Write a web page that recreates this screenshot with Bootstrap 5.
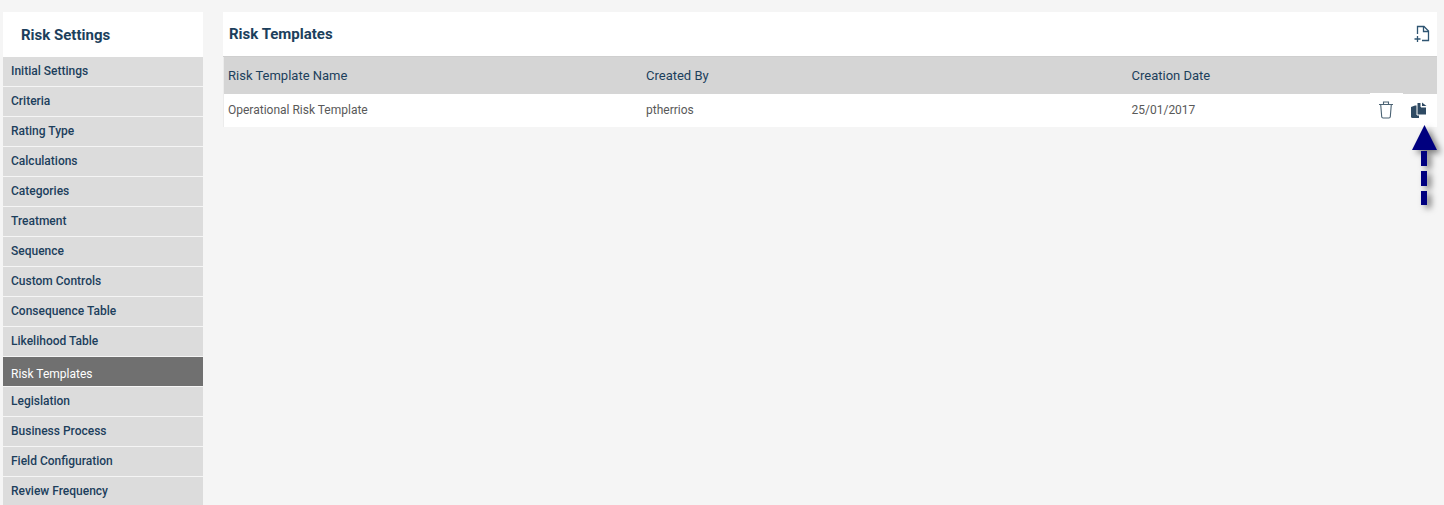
<!DOCTYPE html>
<html lang="en">
<head>
  <meta charset="UTF-8" />
  <meta name="viewport" content="width=device-width, initial-scale=1.0" />
  <title>Risk Templates</title>
  <link href="https://cdn.jsdelivr.net/npm/bootstrap@5.3.0/dist/css/bootstrap.min.css" rel="stylesheet">
  <style>
    html, body { height: 505px; overflow: hidden; }
    body {
      background: #f5f5f5;
      font-family: Roboto, "Liberation Sans", sans-serif;
      color: #1c3f5c;
    }
    .page-wrap { padding: 12px 7px 0 3px; gap: 20px; position: relative; }
    .side-panel { width: 200px; flex: none; }
    .side-title {
      height: 45px;
      padding: 14px 18px 0;
      font-size: 15px;
      font-weight: 700;
      line-height: 19px;
      background: #fff;
    }
    .side-link {
      display: block;
      height: 29px;
      margin-bottom: 1px;
      padding: 0 8px;
      font-size: 12px;
      font-weight: 500;
      line-height: 28px;
      color: #1c3f5c;
      background: #dcdcdc;
      text-decoration: none;
    }
    .side-link.current { background: #707070; color: #fff; line-height: 34px; font-weight: 400; }
    .main-panel { flex: 1; min-width: 0; }
    .main-head {
      height: 45px;
      padding: 0 7px 0 6px;
      background: #fff;
      border-bottom: 1px solid #cfcfcf;
    }
    .main-head h1 { font-size: 15px; font-weight: 700; margin: 0; line-height: 19px; }
    .tpl-table { table-layout: fixed; margin: 0; border-left: 1px solid #ececec; }
    .tpl-table th, .tpl-table td { padding: 0 0 0 4px; border: 0; vertical-align: middle; font-size: 12px; }
    .tpl-table th {
      height: 37px;
      background: #d5d5d5;
      color: #1c3f5c;
      font-size: 13px;
      font-weight: 400;
    }
    .tpl-table td { height: 33px; padding-bottom: 1px; background: #fff; color: #595959; }
    .tool-cell { position: relative; }
    .tool-cell::before {
      content: "";
      position: absolute;
      top: -1px;
      right: 34px;
      width: 33px;
      height: 1px;
      background: #fff;
    }
    .row-tools { gap: 17px; padding-right: 10px; }
    .up-arrow {
      position: absolute;
      left: 1406px;
      top: 123px;
      filter: drop-shadow(4px 3px 3px rgba(0,0,0,.5));
    }
  </style>
</head>
<body>
<div class="page-wrap d-flex">
  <div class="side-panel">
    <div class="side-title">Risk Settings</div>
    <a class="side-link" href="#">Initial Settings</a>
    <a class="side-link" href="#">Criteria</a>
    <a class="side-link" href="#">Rating Type</a>
    <a class="side-link" href="#">Calculations</a>
    <a class="side-link" href="#">Categories</a>
    <a class="side-link" href="#">Treatment</a>
    <a class="side-link" href="#">Sequence</a>
    <a class="side-link" href="#">Custom Controls</a>
    <a class="side-link" href="#">Consequence Table</a>
    <a class="side-link" href="#">Likelihood Table</a>
    <a class="side-link current" href="#">Risk Templates</a>
    <a class="side-link" href="#">Legislation</a>
    <a class="side-link" href="#">Business Process</a>
    <a class="side-link" href="#">Field Configuration</a>
    <a class="side-link" href="#">Review Frequency</a>
  </div>
  <div class="main-panel">
    <div class="main-head d-flex align-items-center justify-content-between">
      <h1>Risk Templates</h1>
      <svg width="16" height="18" viewBox="0 0 16 18" fill="none" stroke="#2f5572" stroke-width="1.3">
        <path d="M3.500 9V1.500h6.500l4.500 4.500v9.500H8"/>
        <path d="M9.500 1.500V6.500h5"/>
        <path d="M0.500 14h6M3.500 11v6"/>
      </svg>
    </div>
    <table class="table tpl-table">
      <colgroup>
        <col style="width:418.500px"><col style="width:485.500px"><col style="width:220px"><col>
      </colgroup>
      <thead>
        <tr><th>Risk Template Name</th><th>Created By</th><th>Creation Date</th><th></th></tr>
      </thead>
      <tbody>
        <tr>
          <td>Operational Risk Template</td>
          <td>ptherrios</td>
          <td>25/01/2017</td>
          <td class="tool-cell">
            <div class="row-tools d-flex justify-content-end align-items-center">
              <svg width="16" height="18" viewBox="0 0 16 18" fill="none" stroke="#4a6273" stroke-width="1.1">
                <path d="M1 3.500h14M5.500 3.500V1h5v2.500"/>
                <path d="M2.700 3.500l1 12.200q.1 1.300 1.400 1.300h5.800q1.300 0 1.400-1.300l1-12.200"/>
              </svg>
              <svg width="16" height="17" viewBox="0 0 16 17">
                <path fill="#2e4a63" d="M0 5 4 3.500h4V16H1.500Q0 16 0 14.500z"/>
                <path fill="#2e4a63" d="M6 0.500h4v4.500h5.500v8H6z" stroke="#fff" stroke-width="1"/>
                <path fill="#2e4a63" d="M11 0.500 15.500 4H11z"/>
              </svg>
            </div>
          </td>
        </tr>
      </tbody>
    </table>
  </div>
  <svg class="up-arrow" width="40" height="90" viewBox="0 0 40 90">
    <path fill="#00007f" d="M18.500 2 31 27H6z"/>
    <path fill="#00007f" d="M15 28h6v15h-6zM15 48h6v15h-6zM15 68h6v14h-6z"/>
  </svg>
</div>
<script src="https://cdn.jsdelivr.net/npm/bootstrap@5.3.0/dist/js/bootstrap.bundle.min.js"></script>
</body>
</html>
